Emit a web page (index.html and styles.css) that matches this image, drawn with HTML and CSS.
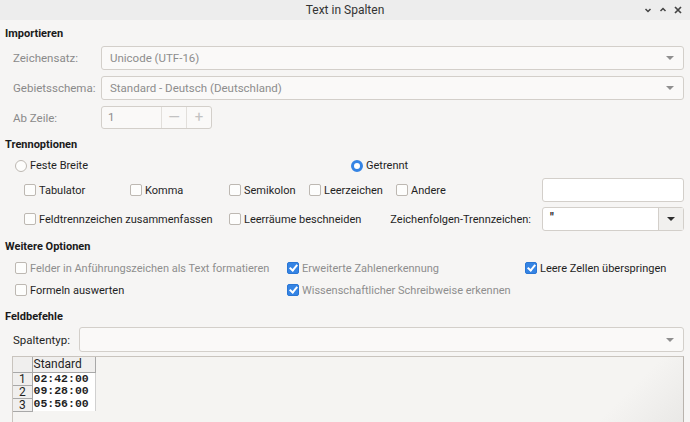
FILE: index.html
```html
<!DOCTYPE html>
<html lang="de">
<head>
    <meta charset="UTF-8">
    <title>Text in Spalten</title>
<link rel="stylesheet" href="styles.css">
</head>
<body>
    <div class="window">
        <div class="titlebar">
            <span></span>
            <span class="title">Text in Spalten</span>
            <div class="wm-buttons">
                <svg width="10" height="10" viewBox="0 0 10 10"><path d="M2.5 4 L5 6.5 L7.5 4" fill="none" stroke="#444" stroke-width="1.5"/></svg>
                <svg width="10" height="10" viewBox="0 0 10 10"><path d="M2.5 6 L5 3.5 L7.5 6" fill="none" stroke="#444" stroke-width="1.5"/></svg>
                <svg width="10" height="10" viewBox="0 0 10 10"><path d="M2 2 L8 8 M8 2 L2 8" fill="none" stroke="#444" stroke-width="1.7"/></svg>
            </div>
        </div>

        <div class="content">
            <!-- Importieren -->
            <h3 class="heading">Importieren</h3>
            <div class="form-rows">
                <div class="form-row">
                    <label class="field-label">Zeichensatz:</label>
                    <div class="combo"><span>Unicode (UTF-16)</span><i class="arrow"></i></div>
                </div>
                <div class="form-row">
                    <label class="field-label">Gebietsschema:</label>
                    <div class="combo"><span>Standard - Deutsch (Deutschland)</span><i class="arrow"></i></div>
                </div>
                <div class="form-row spin-row">
                    <label class="field-label">Ab Zeile:</label>
                    <div class="spin">
                        <span class="spin-value">1</span>
                        <span class="spin-btn">&#8212;</span>
                        <span class="spin-btn">+</span>
                    </div>
                </div>
            </div>

            <!-- Trennoptionen -->
            <h3 class="heading heading-sep">Trennoptionen</h3>
            <div class="radio-row">
                <label class="opt"><span class="radio"></span>Feste Breite</label>
                <label class="opt"><span class="radio on"></span>Getrennt</label>
            </div>
            <div class="sep-grid">
                <label class="opt"><span class="check"></span>Tabulator</label>
                <label class="opt"><span class="check"></span>Komma</label>
                <label class="opt"><span class="check"></span>Semikolon</label>
                <label class="opt"><span class="check"></span>Leerzeichen</label>
                <label class="opt"><span class="check"></span>Andere</label>
                <div class="entry"></div>

                <label class="opt span-2"><span class="check"></span>Feldtrennzeichen zusammenfassen</label>
                <label class="opt span-2"><span class="check"></span>Leerräume beschneiden</label>
                <label class="quote-label">Zeichenfolgen-Trennzeichen:</label>
                <div class="entry-combo">
                    <span class="entry-text">"</span>
                    <span class="entry-btn"><i class="arrow dark"></i></span>
                </div>
            </div>

            <!-- Weitere Optionen -->
            <h3 class="heading heading-more">Weitere Optionen</h3>
            <div class="more-grid">
                <label class="opt disabled"><span class="check"></span>Felder in Anführungszeichen als Text formatieren</label>
                <label class="opt disabled"><span class="check on"></span>Erweiterte Zahlenerkennung</label>
                <label class="opt"><span class="check on"></span>Leere Zellen überspringen</label>
                <label class="opt"><span class="check"></span>Formeln auswerten</label>
                <label class="opt disabled"><span class="check on"></span>Wissenschaftlicher Schreibweise erkennen</label>
                <span></span>
            </div>

            <!-- Feldbefehle -->
            <h3 class="heading heading-fields">Feldbefehle</h3>
            <div class="form-row type-row">
                <label class="field-label dark">Spaltentyp:</label>
                <div class="combo"><span></span><i class="arrow"></i></div>
            </div>

            <div class="preview">
                <table class="grid">
                    <tr><th class="corner"></th><th class="col-head">Standard</th></tr>
                    <tr><th class="row-head">1</th><td>02:42:00</td></tr>
                    <tr><th class="row-head">2</th><td>09:28:00</td></tr>
                    <tr><th class="row-head">3</th><td>05:56:00</td></tr>
                </table>
            </div>
        </div>
    </div>
</body>
</html>
```

FILE: styles.css
```css
* {
  margin: 0;
  padding: 0;
  box-sizing: border-box;
}
body {
    font-family: Roboto, sans-serif;
    font-size: 11px;
    color: #1f1f1f;
    background: #f6f5f4;
    width: 690px;
    height: 422px;
    overflow: hidden;
}
.window {
    height: 422px;
    display: flex;
    flex-direction: column;
}
.titlebar {
    height: 20px;
    flex-shrink: 0;
    background: #ededed;
    display: grid;
    grid-template-columns: 1fr auto 1fr;
    align-items: center;
}
.title {
    font-size: 12px;
    color: #333;
}
.wm-buttons {
    display: flex;
    justify-content: flex-end;
    gap: 5px;
    padding-right: 7px;
}
.content {
    padding: 5px 6px 0 5px;
}
.heading {
    font-size: 11px;
    font-weight: bold;
    color: #1a1a1a;
    height: 16px;
    line-height: 16px;
    padding-top: 1px;
}
.heading-sep {
    margin-top: 7px;
}
.heading-more {
    margin-top: 7px;
}
.heading-fields {
    margin-top: 10px;
}

/* import rows */
.form-rows {
    margin-top: 5px;
    display: flex;
    flex-direction: column;
    gap: 6px;
}
.form-row {
    display: flex;
    align-items: center;
}
.field-label {
    width: 96px;
    padding-left: 8px;
    color: #8a8a8a;
    font-size: 11.5px;
}
.field-label.dark {
    width: 74px;
    color: #1f1f1f;
}
.combo {
    flex: 1;
    height: 24px;
    border: 1px solid #d3cfca;
    border-radius: 3px;
    background: #faf9f8;
    display: flex;
    align-items: center;
    justify-content: space-between;
    padding: 0 8px 0 8px;
    color: #8d8d8d;
    font-size: 11.5px;
}
.arrow {
    width: 0;
    height: 0;
    border-left: 4px solid transparent;
    border-right: 4px solid transparent;
    border-top: 4px solid #8f8f8f;
    margin-right: 1px;
}
.arrow.dark {
    border-top-color: #2e2e2e;
}
.spin {
    width: 111px;
    height: 23px;
    border: 1px solid #d3cfca;
    border-radius: 3px;
    background: #faf9f8;
    display: flex;
    color: #8d8d8d;
    font-size: 11.5px;
}
.spin-value {
    flex: 1;
    padding-left: 6px;
    line-height: 21px;
}
.spin-btn {
    width: 25px;
    border-left: 1px solid #e2dfdb;
    text-align: center;
    line-height: 20px;
    font-size: 15px;
    color: #c2c2c2;
}

/* options */
.opt {
    display: flex;
    align-items: center;
    white-space: nowrap;
    gap: 3px;
}
.opt.disabled {
    color: #8e8e8e;
}
.check {
    width: 12px;
    height: 12px;
    border: 1px solid #bdb8b2;
    border-radius: 2px;
    background: #fdfdfc;
    flex-shrink: 0;
    position: relative;
}
.check.on {
    background: #3584e4;
    border-color: #2a76d4;
}
.check.on::after {
    content: "";
    position: absolute;
    left: 3px;
    top: 0px;
    width: 3px;
    height: 6px;
    border-right: 2px solid #fff;
    border-bottom: 2px solid #fff;
    transform: rotate(40deg);
}
.radio {
    width: 12px;
    height: 12px;
    border: 1px solid #bdb8b2;
    border-radius: 50%;
    background: #fdfdfc;
    flex-shrink: 0;
}
.radio.on {
    border: 3px solid #3584e4;
    background: #fff;
}
.radio-row {
    margin-top: 5px;
    height: 16px;
    display: grid;
    grid-template-columns: 336px 1fr;
    padding-left: 10px;
    padding-top: 1px;
}
.sep-grid {
    margin-top: 5px;
    padding-left: 19px;
    display: grid;
    grid-template-columns: 106px 99px 80px 87px 146px 1fr;
    grid-auto-rows: 24px;
    row-gap: 5px;
    align-items: center;
}
.span-2 {
    grid-column: span 2;
}
.quote-label {
    justify-self: end;
    padding-right: 11px;
    white-space: nowrap;
}
.entry {
    height: 24px;
    border: 1px solid #d3cfca;
    border-radius: 3px;
    background: #fff;
}
.entry-combo {
    height: 24px;
    border: 1px solid #d3cfca;
    border-radius: 3px;
    background: #fff;
    display: flex;
}
.entry-text {
    flex: 1;
    padding-left: 7px;
    line-height: 20px;
    font-weight: bold;
    font-size: 12px;
    color: #222;
}
.entry-btn {
    width: 25px;
    border-left: 1px solid #d3cfca;
    background: #f1f0ee;
    display: flex;
    align-items: center;
    justify-content: center;
}
.more-grid {
    margin-top: 6px;
    padding-left: 10px;
    display: grid;
    grid-template-columns: 272px 238px 1fr;
    grid-auto-rows: 16px;
    row-gap: 6px;
    align-items: center;
}
.type-row {
    margin-top: 3px;
}
.type-row .combo {
    height: 25px;
}

/* preview */
.preview {
    margin: 4px 0 0 7px;
    height: 70px;
    border: 1px solid #c9c4be;
    border-right-color: #b9b3ad;
    background: linear-gradient(135deg, #f5f4f2 88%, #e9e8e6 100%);
}
.grid {
    border-collapse: collapse;
    font-size: 12px;
}
.grid th {
    font-weight: normal;
    background: #f0efee;
    border: 1px solid #a8a8a8;
    border-top: none;
    border-left: none;
}
.corner {
    width: 19px;
    height: 15px;
}
.col-head {
    width: 63px;
    text-align: left;
    padding-left: 1px;
    line-height: 13px;
}
.row-head {
    height: 13px;
    line-height: 11px;
    vertical-align: bottom;
    text-align: center;
}
.grid td {
    background: #fff;
    border-right: 1px solid #d0d0d0;
    font-family: "Liberation Mono", monospace;
    font-weight: bold;
    font-size: 11.5px;
    line-height: 12px;
    padding-left: 1px;
    vertical-align: top;
}
```
